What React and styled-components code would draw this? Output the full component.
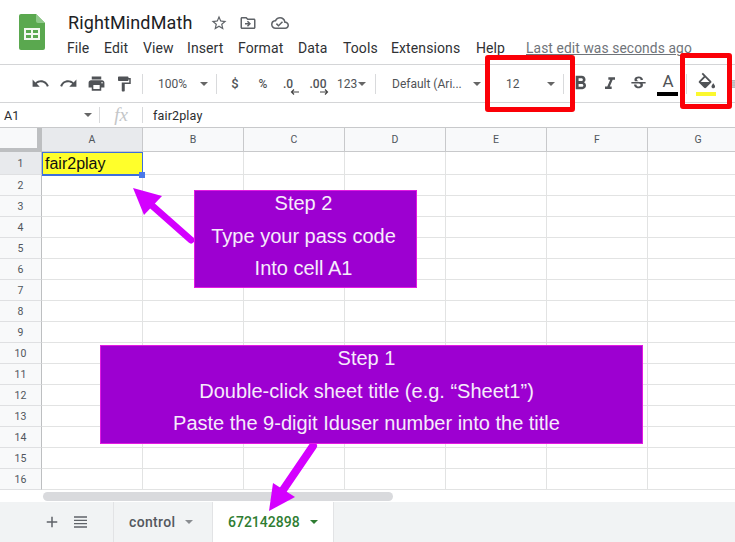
import React from "react";
import styled, { createGlobalStyle } from "styled-components";
import {
  MdUndo, MdRedo, MdPrint, MdFormatPaint, MdFormatBold, MdFormatItalic, MdStrikethroughS,
  MdAdd, MdStarBorder, MdOutlineDriveFileMove, MdOutlineCloudDone,
} from "react-icons/md";

const Global = createGlobalStyle`
  html, body { margin: 0; padding: 0; background: #fff; }
  * { box-sizing: border-box; }
`;

const Page = styled.div`
  position: relative; width: 735px; height: 542px; overflow: hidden; background: #fff;
  font-family: Roboto, "Liberation Sans", sans-serif; color: #3c4043;
  display: flex; flex-direction: column;
`;

const Header = styled.header`
  height: 65px; flex: none; display: flex; padding: 14px 0 0 19px; border-bottom: 1px solid #d4d5d7;
`;
const LogoBox = styled.svg`width: 26px; height: 36px; flex: none;`;
const HeaderText = styled.div`margin-left: 22px; display: flex; flex-direction: column; margin-top: -3px;`;
const TitleRow = styled.div`display: flex; align-items: center; height: 22px; margin-bottom: 4px; padding-left: 1px;`;
const Title = styled.div`font-size: 18px; color: #202124; width: 142px; letter-spacing: .12px; white-space: nowrap;`;
const TitleIcon = styled.span`display: inline-flex; width: ${p => p.$w}px; justify-content: flex-start; color: #5f6368; margin-top: 1px;`;
const MenuRow = styled.nav`display: flex; align-items: center; height: 22px; font-size: 14px; letter-spacing: .1px; color: #2f3134; white-space: nowrap;`;
const MenuItem = styled.span`width: ${p => p.$w}px; flex: none;`;
const LastEdit = styled.span`color: #70747a; text-decoration: underline; font-size: 13.8px;`;

const Toolbar = styled.div`
  height: 38px; flex: none; display: flex; align-items: center; border-bottom: 1px solid #d4d5d7;
  padding-left: 26px; font-size: 12px; color: #444746; white-space: nowrap; overflow: hidden;
`;
const Tool = styled.div`
  width: ${p => p.$w}px; height: 28px; flex: none; display: flex; align-items: center;
  justify-content: ${p => p.$start ? "flex-start" : "center"}; font-weight: ${p => p.$bold ? 500 : 400}; font-size: ${p => p.$size || 12}px;
  color: #505357; position: relative; padding-left: ${p => p.$pl || 0}px;
`;
const Sep = styled.span`width: 1px; height: 20px; background: #d9dadc; flex: none;`;
const Caret = styled.span`
  flex: none; width: 0; height: 0; border-left: 4px solid transparent; border-right: 4px solid transparent;
  border-top: 4px solid ${p => p.$c || "#666"}; margin-left: ${p => p.$ml || 0}px;
`;
const Sub = styled.svg`position: absolute; left: 17px; bottom: 3px; width: 9px; height: 6px;`;
const ColorBar = styled.span`
  position: absolute; left: ${p => p.$l}px; bottom: 2px; width: ${p => p.$wd}px; height: 4px; background: ${p => p.$c};
`;
const Lifted = styled.span`display: flex; margin-top: -6px;`;
const BucketIcon = styled.svg`width: 20px; height: 20px; fill: #505357;`;

const FormulaBar = styled.div`
  height: 24px; flex: none; display: flex; align-items: center; font-size: 12.5px; color: #2a2c2e;
`;
const NameBox = styled.div`width: 99px; padding: 0 7px 0 4px; display: flex; align-items: center; justify-content: space-between;`;
const FxBox = styled.div`
  width: 44px; height: 16px; border-left: 1px solid #d9dadc; border-right: 1px solid #d9dadc;
  display: flex; align-items: center; justify-content: center;
  font-family: "Liberation Serif", serif; font-style: italic; font-size: 19px; color: #c4c6c8; flex: none;
`;
const FormulaText = styled.div`padding-left: 10px; letter-spacing: .15px;`;

const Sheet = styled.div`
  flex: none; height: 363px; display: grid; overflow: hidden; border-top: 1px solid #c8c9cb;
  grid-template-columns: 42px repeat(7, 101px);
  grid-template-rows: 24px 23px repeat(15, 21px);
`;
const Corner = styled.div`background: #f8f9fa; border-right: 5px solid #bdbfc1; border-bottom: 4px solid #bdbfc1;`;
const ColHead = styled.div`
  background: ${p => p.$on ? "#e8eaed" : "#f8f9fa"}; border-right: 1px solid #c8c9cb; border-bottom: 1px solid #c8c9cb;
  display: flex; align-items: center; justify-content: center; font-size: 10.5px; color: #50565c;
`;
const RowHead = styled.div`
  background: ${p => p.$on ? "#e8eaed" : "#f8f9fa"}; border-right: 1px solid #bdbfc1; border-bottom: 1px solid #dfe0e2;
  display: flex; align-items: center; justify-content: center; font-size: 10.5px; color: #50565c;
`;
const Cell = styled.div`border-right: 1px solid #e2e3e3; border-bottom: 1px solid #e2e3e3;`;
const ActiveCell = styled.div`
  position: relative; background: #ffff2b; border: solid #3d6fdc; border-width: 1px 1px 2px 1px; margin: 0 0 -1px 0;
  font-family: "Liberation Sans", sans-serif; font-size: 16px; color: #111; line-height: 21px; padding-left: 2px;
`;
const Handle = styled.span`
  position: absolute; right: -3px; bottom: -4px; width: 6px; height: 6px; background: #4a78e8;
`;

const ScrollTrack = styled.div`
  height: 12px; flex: none; background: #fff; padding-left: 43px; display: flex; align-items: center;
`;
const Thumb = styled.div`width: 350px; height: 9px; border-radius: 5px; background: #d9dadd;`;

const TabBar = styled.div`
  flex: 1; background: #f1f3f4; display: flex; align-items: stretch; padding-left: 43px;
`;
const TabIcon = styled.div`
  width: ${p => p.$w}px; display: flex; align-items: center; color: #5f6368;
`;
const Tab = styled.div`
  width: ${p => p.$w}px; display: flex; align-items: center; padding-left: 15px; font-size: 14px; font-weight: 500;
  letter-spacing: ${p => p.$on ? 0 : .35}px;
  color: ${p => p.$on ? "#2f7d32" : "#54585e"}; background: ${p => p.$on ? "#fff" : "transparent"};
  border-left: 1px solid #e2e3e5; border-right: 1px solid ${p => p.$on ? "#e2e3e5" : "transparent"};
`;

const Callout = styled.div`
  position: absolute; left: ${p => p.$l}px; top: ${p => p.$t}px; width: ${p => p.$w}px; height: ${p => p.$h}px;
  padding-right: ${p => p.$pr}px;
  background: #9d00d1; border: 1px solid #e31ae3; color: #f6ecfb; text-align: center;
  font-family: "Liberation Sans", Arial, sans-serif; font-size: 20px; line-height: 32.5px;
`;
const Line = styled.div`height: 32.5px; white-space: nowrap; &:first-child { margin-top: -4px; }`;
const RedBox = styled.div`
  position: absolute; left: ${p => p.$l}px; top: ${p => p.$t}px; width: ${p => p.$w}px; height: ${p => p.$h}px;
  border: 5px solid #fb0007; border-radius: 3px;
`;
const Arrow = styled.svg`position: absolute; left: 0; top: 0; width: 735px; height: 542px; pointer-events: none;`;
const LinesIcon = styled.svg`width: 13px; height: 12px;`;

const rows = Array.from({ length: 16 }, (_, i) => i + 1);
const cols = ["A", "B", "C", "D", "E", "F", "G"];
const fourLines = "M0 1h13M0 4.330h13M0 7.660h13M0 11h13";

export default function App() {
  return (
    <Page>
      <Global />
      <Header>
        <LogoBox viewBox="0 0 26 36">
          <path d="M2 0h15l9 9v25a2 2 0 0 1-2 2H2a2 2 0 0 1-2-2V2a2 2 0 0 1 2-2z" fill="#5aa84f" />
          <path d="M17 0l9 9h-7a2 2 0 0 1-2-2z" fill="#8fc98a" />
          <path d="M5 14h16v12H5z" fill="#f3f8f1" />
          <path d="M7 16h5v3H7zM14 16h5v3h-5zM7 21h5v3H7zM14 21h5v3h-5z" fill="#5aa84f" />
        </LogoBox>
        <HeaderText>
          <TitleRow>
            <Title>RightMindMath</Title>
            <TitleIcon $w={29}><MdStarBorder size={18} /></TitleIcon>
            <TitleIcon $w={32}><MdOutlineDriveFileMove size={18} /></TitleIcon>
            <TitleIcon $w={20}><MdOutlineCloudDone size={18} /></TitleIcon>
          </TitleRow>
          <MenuRow>
            <MenuItem $w={37}>File</MenuItem>
            <MenuItem $w={39}>Edit</MenuItem>
            <MenuItem $w={44}>View</MenuItem>
            <MenuItem $w={51}>Insert</MenuItem>
            <MenuItem $w={60}>Format</MenuItem>
            <MenuItem $w={45}>Data</MenuItem>
            <MenuItem $w={48}>Tools</MenuItem>
            <MenuItem $w={85}>Extensions</MenuItem>
            <MenuItem $w={50}>Help</MenuItem>
            <LastEdit>Last edit was seconds ago</LastEdit>
          </MenuRow>
        </HeaderText>
      </Header>

      <Toolbar>
        <Tool $w={28}><MdUndo size={19} /></Tool>
        <Tool $w={28}><MdRedo size={19} /></Tool>
        <Tool $w={28}><MdPrint size={19} /></Tool>
        <Tool $w={28}><MdFormatPaint size={18} /></Tool>
        <Tool $w={4} />
        <Sep />
        <Tool $w={73} $start $pl={15}>100%<Caret $ml={13} /></Tool>
        <Sep />
        <Tool $w={36} $bold $size={13}>$</Tool>
        <Tool $w={20} $bold>%</Tool>
        <Tool $w={30} $bold>.0<Sub viewBox="0 0 9 6"><path d="M9 3H2M4 .5L1.500 3 4 5.500" stroke="#444" strokeWidth="1.200" fill="none" /></Sub></Tool>
        <Tool $w={30} $bold>.00<Sub viewBox="0 0 9 6"><path d="M0 3h7M5 .5L7.500 3 5 5.500" stroke="#444" strokeWidth="1.200" fill="none" /></Sub></Tool>
        <Tool $w={42} $start $pl={4}>123<Caret $ml={1} /></Tool>
        <Sep />
        <Tool $w={119} $start $pl={16}>Default (Ari...<Caret $ml={11} /></Tool>
        <Tool $w={68} $start $pl={11}>12<Caret $ml={27} /></Tool>
        <Sep />
        <Tool $w={33}><MdFormatBold size={23} /></Tool>
        <Tool $w={26}><MdFormatItalic size={20} /></Tool>
        <Tool $w={31}><MdStrikethroughS size={19} /></Tool>
        <Tool $w={28} $size={17}><Lifted>A</Lifted><ColorBar $l={3} $wd={21} $c="#000" /></Tool>
        <Tool $w={4} />
        <Sep />
        <Tool $w={38}>
          <Lifted>
            <BucketIcon viewBox="0 0 22 18">
              <path d="M16.560 8.940 7.620 0 6.210 1.410l2.380 2.380-5.150 5.150c-.59.59-.59 1.540 0 2.120l5.500 5.500c.29.29.68.44 1.060.44s.77-.15 1.060-.44l5.500-5.500c.59-.58.59-1.530 0-2.120zM5.210 10 10 5.210 14.790 10H5.210zM19 11.500s-2 2.170-2 3.500c0 1.100.9 2 2 2s2-.9 2-2c0-1.330-2-3.500-2-3.500z" />
            </BucketIcon>
          </Lifted>
          <ColorBar $l={9} $wd={20} $c="#fbf82e" />
        </Tool>
        <Tool $w={10} $start $pl={2}><LinesIcon viewBox="0 0 13 12"><path d={fourLines} stroke="#5f6368" strokeWidth="1.300" /></LinesIcon></Tool>
      </Toolbar>

      <FormulaBar>
        <NameBox>A1<Caret $c="#666" /></NameBox>
        <FxBox>fx</FxBox>
        <FormulaText>fair2play</FormulaText>
      </FormulaBar>

      <Sheet>
        <Corner />
        {cols.map((c) => <ColHead key={c} $on={c === "A"}>{c}</ColHead>)}
        {rows.map((r) => (
          <React.Fragment key={r}>
            <RowHead $on={r === 1}>{r}</RowHead>
            {cols.map((c) =>
              r === 1 && c === "A" ? (
                <ActiveCell key={c}>fair2play<Handle /></ActiveCell>
              ) : (
                <Cell key={c} />
              )
            )}
          </React.Fragment>
        ))}
      </Sheet>

      <ScrollTrack><Thumb /></ScrollTrack>

      <TabBar>
        <TabIcon $w={31}><MdAdd size={18} /></TabIcon>
        <TabIcon $w={39}><LinesIcon viewBox="0 0 13 12"><path d={fourLines} stroke="#5f6368" strokeWidth="1.300" /></LinesIcon></TabIcon>
        <Tab $w={99}>control<Caret $ml={10} $c="#8a8d91" /></Tab>
        <Tab $w={122} $on>672142898<Caret $ml={10} $c="#2f7d32" /></Tab>
      </TabBar>

      <Arrow viewBox="0 0 735 542">
        <path d="M191 240L148 202" stroke="#d400ff" strokeWidth="7" strokeLinecap="round" />
        <path d="M133 188L162 196L144 215Z" fill="#d400ff" />
        <path d="M313 446L281 493" stroke="#d400ff" strokeWidth="8" strokeLinecap="round" />
        <path d="M269 511L273 483L295 497Z" fill="#d400ff" />
      </Arrow>

      <Callout $l={194} $t={190} $w={223} $h={98} $pr={4}>
        <Line>Step 2</Line>
        <Line>Type your pass code</Line>
        <Line>Into cell A1</Line>
      </Callout>
      <Callout $l={100} $t={345} $w={543} $h={99} $pr={10}>
        <Line>Step 1</Line>
        <Line>Double-click sheet title (e.g. “Sheet1”)</Line>
        <Line>Paste the 9-digit Iduser number into the title</Line>
      </Callout>

      <RedBox $l={485} $t={55} $w={90} $h={57} />
      <RedBox $l={680} $t={53} $w={52} $h={56} />
    </Page>
  );
}
